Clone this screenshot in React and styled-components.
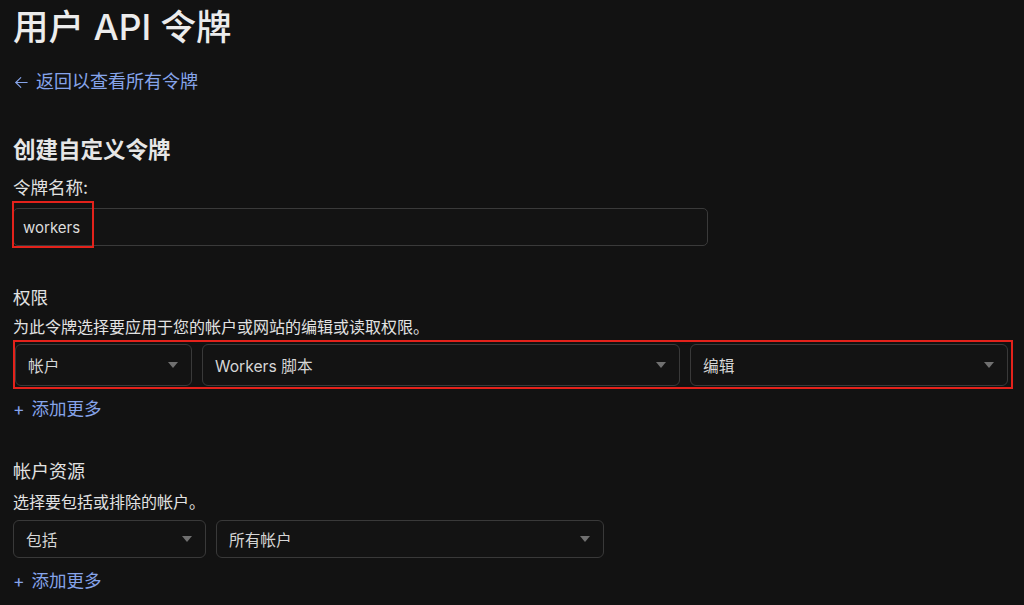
import styled, { createGlobalStyle } from 'styled-components';

const GlobalStyle = createGlobalStyle`
  html, body {
    margin: 0;
    padding: 0;
    background: #121212;
  }
  body {
    font-family: Inter, "Noto Sans CJK SC", sans-serif;
    color: #e4e4e4;
  }
`;

const Page = styled.div`
  padding: 8px 13px 0;
  height: 605px;
  box-sizing: border-box;
  overflow: hidden;
`;

const Title = styled.h1`
  margin: 0;
  font-size: 35.5px;
  line-height: 40px;
  font-weight: 500;
  color: #ececec;
`;

const BackLink = styled.a`
  display: flex;
  align-items: center;
  gap: 6px;
  margin-top: 22px;
  font-size: 18px;
  line-height: 24px;
  color: #86a4ea;
  text-decoration: none;
`;

const Heading = styled.h2`
  margin: 42px 0 0;
  font-size: 22.5px;
  line-height: 28px;
  font-weight: 600;
  color: #e6e6e6;
`;

const Label = styled.div`
  margin-top: ${({ $mt }) => $mt}px;
  font-size: ${({ $size }) => $size || 17}px;
  line-height: ${({ $lh }) => $lh || 22}px;
  color: #e2e2e2;
`;

const InputWrap = styled.div`
  position: relative;
  margin-top: 9px;
  width: 695px;
`;

const Input = styled.div`
  box-sizing: border-box;
  height: 38px;
  border: 1px solid #3a3a3a;
  border-radius: 5px;
  background: #131313;
  padding: 0 9px;
  display: flex;
  align-items: center;
  font-size: 15px;
  color: #dcdcdc;
`;

const Highlight = styled.div`
  position: absolute;
  left: -1px;
  top: -7px;
  width: 82px;
  height: 47px;
  box-sizing: border-box;
  border: 2px solid #e3221b;
  pointer-events: none;
`;

const RedRow = styled.div`
  margin-top: 2px;
  width: 1000px;
  box-sizing: border-box;
  border: 2px solid #e3221b;
  padding: 2px 3px 1px 0;
  display: flex;
  gap: 10px;
`;

const Row = styled.div`
  margin-top: 7px;
  display: flex;
  gap: 10px;
`;

const Select = styled.div`
  box-sizing: border-box;
  width: ${({ $w }) => $w}px;
  height: ${({ $h }) => $h}px;
  border: 1px solid #393939;
  border-radius: 6px;
  background: #131313;
  padding: 0 13px 0 12px;
  display: flex;
  align-items: center;
  justify-content: space-between;
  font-size: 15.7px;
  color: #d6d6d6;
`;

const Caret = styled.span`
  width: 0;
  height: 0;
  border-left: 5.5px solid transparent;
  border-right: 5.5px solid transparent;
  border-top: 6px solid #707070;
`;

const AddMore = styled.a`
  display: flex;
  gap: 7px;
  margin-top: ${({ $mt }) => $mt}px;
  font-size: 17.5px;
  line-height: 24px;
  color: #86a4ea;
  text-decoration: none;
`;

function ArrowLeft() {
  return (
    <svg width="17" height="17" viewBox="0 0 24 24" fill="none" stroke="currentColor" strokeWidth="1.5" strokeLinecap="round" strokeLinejoin="round">
      <path d="M20 12H4" />
      <path d="M11 19l-7-7 7-7" />
    </svg>
  );
}

function Dropdown({ w, h, children }) {
  return (
    <Select $w={w} $h={h}>
      <span>{children}</span>
      <Caret />
    </Select>
  );
}

export default function App() {
  return (
    <>
      <GlobalStyle />
      <Page>
        <Title>用户 API 令牌</Title>
        <BackLink href="#">
          <ArrowLeft />
          返回以查看所有令牌
        </BackLink>
        <Heading>创建自定义令牌</Heading>
        <Label $mt={13} $size={17.5}>令牌名称:</Label>
        <InputWrap>
          <Input>workers</Input>
          <Highlight />
        </InputWrap>

        <Label $mt={40} $size={17.5} $lh={24}>权限</Label>
        <Label $mt={6} $size={16}>为此令牌选择要应用于您的帐户或网站的编辑或读取权限。</Label>
        <RedRow>
          <Dropdown w={177} h={42}>帐户</Dropdown>
          <Dropdown w={478} h={42}>Workers 脚本</Dropdown>
          <Dropdown w={318} h={42}>编辑</Dropdown>
        </RedRow>
        <AddMore href="#" $mt={8}><span>+</span>添加更多</AddMore>

        <Label $mt={39} $size={18} $lh={24}>帐户资源</Label>
        <Label $mt={7} $size={16}>选择要包括或排除的帐户。</Label>
        <Row>
          <Dropdown w={193} h={38}>包括</Dropdown>
          <Dropdown w={388} h={38}>所有帐户</Dropdown>
        </Row>
        <AddMore href="#" $mt={11}><span>+</span>添加更多</AddMore>
      </Page>
    </>
  );
}
